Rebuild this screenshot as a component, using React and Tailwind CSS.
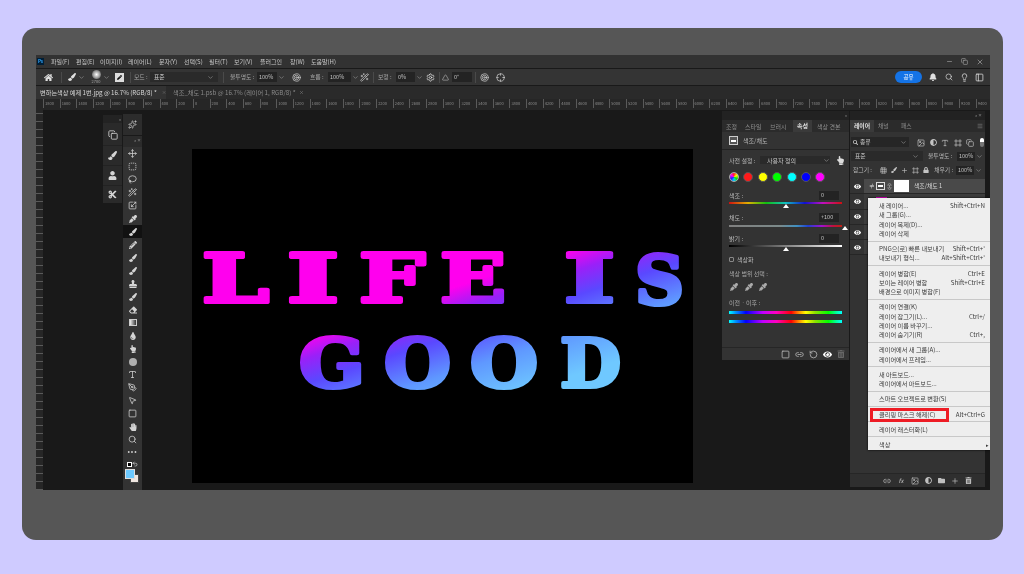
import React from "react";
import { ChevronDown, Lasso, Minus, Move, Search, Square, SquareDashed, X, Copy, PanelLeft, Lightbulb, Undo2, Plus, Link2, Type, Image, Crosshair, Scaling, Grid3x3, Frame, RotateCcw, Settings, Triangle, Sparkles, PenTool, MousePointer2, Target, Wand2, Menu } from "lucide-react";
import { FaHome, FaPaintBrush, FaBell, FaEye, FaHandPaper, FaStamp, FaEraser, FaTint, FaPencilAlt, FaEyeDropper, FaCut, FaTrashAlt, FaFolder, FaLock, FaUser, FaSearch, FaAdjust, FaHandPointUp } from "react-icons/fa";

const menuItems = [
  ["파일(F)", "w-[25px]"], ["편집(E)", "w-[24px]"], ["이미지(I)", "w-[28px]"], ["레이어(L)", "w-[31px]"], ["문자(Y)", "w-[25px]"], ["선택(S)", "w-[25px]"],
  ["필터(T)", "w-[25px]"], ["보기(V)", "w-[26px]"], ["플러그인", "w-[30px]"], ["창(W)", "w-[21px]"], ["도움말(H)", "w-[30px]"],
];

const rulerLabels = [1800, 1600, 1400, 1200, 1000, 800, 600, 400, 200, 0];
for (let v = 200; v <= 9400; v += 200) rulerLabels.push(v);

const contextMenu = [
  [["새 레이어...", "Shift+Ctrl+N"], ["새 그룹(G)..."], ["레이어 복제(D)..."], ["레이어 삭제"]],
  [["PNG으(로) 빠른 내보내기", "Shift+Ctrl+'"], ["내보내기 형식...", "Alt+Shift+Ctrl+'"]],
  [["레이어 병합(E)", "Ctrl+E"], ["보이는 레이어 병합", "Shift+Ctrl+E"], ["배경으로 이미지 병합(F)"]],
  [["레이어 연결(K)"], ["레이어 잠그기(L)...", "Ctrl+/"], ["레이어 이름 바꾸기..."], ["레이어 숨기기(R)", "Ctrl+,"]],
  [["레이어에서 새 그룹(A)..."], ["레이어에서 프레임..."]],
  [["새 아트보드..."], ["레이어에서 아트보드..."]],
  [["스마트 오브젝트로 변환(S)"]],
  [["클리핑 마스크 해제(C)", "Alt+Ctrl+G"]],
  [["레이어 래스터화(L)"]],
  [["색상", "▸"]],
];

const letters = [
  ["L", 202, 302, 67], ["I", 287, 302, 52], ["F", 359, 302, 66], ["E", 440, 302, 66], ["I", 564, 302, 51], ["S", 635, 304, 49],
  ["G", 299, 387, 66], ["O", 384, 387, 67], ["O", 470, 387, 68], ["D", 560, 387, 61],
];

const Tool = ({ icon: Icon, active, size = 9 }) => (
  <div className={`h-[13px] w-full flex items-center justify-center ${active ? "bg-[#111111]" : ""}`}>
    <Icon size={size} className="text-[#d4d4d4]" />
  </div>
);

const Field = ({ children, className }) => (
  <div className={`h-[9px] bg-[#232323] text-[#c4c4c4] text-[5.5px] leading-[9px] px-[2px] ${className}`}>{children}</div>
);

const Chev = ({ className = "" }) => <ChevronDown size={7} className={`text-[#9a9a9a] shrink-0 ${className}`} />;

const Slider = ({ label, value, track, thumb, gap }) => (
  <div className="relative h-[21px] px-[7px] text-[#b8b8b8]">
    <div className="flex h-[10px] items-center justify-between pr-[3px]">
      <span>{label}</span>
      <Field className="w-[20px]">{value}</Field>
    </div>
    <div className={`h-[2px] ${gap} ${track}`} />
    <div className={`absolute top-[14px] w-0 h-0 border-x-[3px] border-x-transparent border-b-[4px] border-b-white ${thumb}`} />
  </div>
);

const Canvas = () => (
  <svg viewBox="192 149 501 334" className="w-[501px] h-[334px] bg-black block shrink-0">
    <defs>
      <linearGradient id="fade" gradientUnits="userSpaceOnUse" x1="124" y1="380" x2="173.6" y2="532">
        <stop offset="0.09" stopColor="#ff00ee" />
        <stop offset="0.225" stopColor="#9a20f8" />
        <stop offset="0.375" stopColor="#5a48ff" />
        <stop offset="0.594" stopColor="#5f98ff" />
        <stop offset="0.844" stopColor="#6fc8ff" />
      </linearGradient>
    </defs>
    {letters.map(([c, x, y, w], i) => (
      <text key={i} x={x} y={y} textLength={w} lengthAdjust="spacingAndGlyphs" fontFamily="'DejaVu Serif', serif" fontWeight="700" fontSize="68" fill="url(#fade)" stroke="url(#fade)" strokeWidth="4" strokeLinejoin="round">{c}</text>
    ))}
  </svg>
);

const ToolColumns = () => (
  <div className="flex items-start ml-[60px] mt-[4px] shrink-0">
    <div className="w-[19px] h-[88px] bg-[#2a2a2a] mt-[1px]">
      <div className="h-[8px] bg-[#232323] text-[#aaa] text-[4px] leading-[8px] text-right pr-[1px]">»</div>
      <div className="h-[20px] flex items-center justify-center mt-[2px]"><Copy size={10} className="text-[#d4d4d4]" /></div>
      <div className="h-[20px] flex items-center justify-center border-t border-[#222]"><FaPaintBrush size={9} className="text-[#d4d4d4]" /></div>
      <div className="h-[20px] flex items-center justify-center border-t border-[#222]"><FaUser size={9} className="text-[#d4d4d4]" /></div>
      <div className="h-[18px] flex items-center justify-center border-t border-[#222]"><FaCut size={9} className="text-[#d4d4d4]" /></div>
    </div>
    <div className="w-[19px] ml-[1px] flex flex-col">
      <div className="h-[21px] bg-[#2c2c2c] flex items-center justify-center"><Sparkles size={9} className="text-[#bcbcbc]" /></div>
      <div className="h-[354px] bg-[#333333] mt-px flex flex-col">
        <div className="h-[11px] bg-[#2b2b2b] text-[#aaa] text-[4px] leading-[9px] text-right pr-[1px]">» ×</div>
        <Tool icon={Move} />
        <Tool icon={SquareDashed} />
        <Tool icon={Lasso} />
        <Tool icon={Wand2} />
        <Tool icon={Scaling} />
        <Tool icon={FaEyeDropper} size={8} />
        <Tool icon={FaPaintBrush} size={8} active />
        <Tool icon={FaPencilAlt} size={8} />
        <Tool icon={FaPaintBrush} size={8} />
        <Tool icon={FaPaintBrush} size={8} />
        <Tool icon={FaStamp} size={8} />
        <Tool icon={FaPaintBrush} size={8} />
        <Tool icon={FaEraser} size={8} />
        <div className="h-[13px] flex items-center justify-center"><div className="w-[8px] h-[7px] border border-[#ccc] bg-[linear-gradient(90deg,#eeeeee,#333333)]" /></div>
        <Tool icon={FaTint} size={8} />
        <Tool icon={FaHandPointUp} size={8} />
        <div className="h-[13px] flex items-center justify-center"><div className="w-[8px] h-[8px] rounded-full bg-[#b0b0b0]" /></div>
        <Tool icon={Type} />
        <Tool icon={PenTool} />
        <Tool icon={MousePointer2} />
        <Tool icon={Square} />
        <Tool icon={FaHandPaper} size={8} />
        <Tool icon={Search} />
        <div className="h-[13px] text-[#ccc] text-[7px] leading-[11px] text-center tracking-[1px]">•••</div>
        <div className="h-[10px] flex items-center justify-between px-[4px]">
          <div className="w-[5px] h-[5px] bg-black border border-white" />
          <Undo2 size={6} className="text-white" />
        </div>
        <div className="relative h-[17px]">
          <div className="absolute left-[7px] top-[5px] w-[9px] h-[9px] bg-[#efe6e0] border border-[#444]" />
          <div className="absolute left-[2px] top-0 w-[10px] h-[10px] bg-[#6cc9ff] border border-[#ddd]" />
        </div>
      </div>
    </div>
  </div>
);

const PropertiesPanel = () => (
  <div className="w-[127px] h-[249px] mt-px ml-[29px] bg-[#333333] flex flex-col text-[6px] text-[#b8b8b8] shrink-0">
    <div className="h-[9px] bg-[#222222] text-[#aaa] text-[4px] leading-[9px] text-right pr-[2px]">»</div>
    <div className="h-[12px] bg-[#2b2b2b] flex items-center text-[#8e8e8e]">
      <span className="pl-[4px] w-[23px]">조정</span>
      <span className="w-[25px]">스타일</span>
      <span className="w-[23px]">브러시</span>
      <span className="w-[19px] h-full bg-[#3a3a3a] text-[#e0e0e0] text-center leading-[12px] font-bold">속성</span>
      <span className="pl-[5px]">색상 견본</span>
    </div>
    <div className="h-[18px] border-b border-[#222] flex items-center pl-[7px]">
      <div className="w-[9px] h-[9px] border border-[#ccc] bg-[#555] flex items-center justify-center"><div className="w-[5px] h-[2px] bg-white" /></div>
      <span className="ml-[5px]">색조/채도</span>
    </div>
    <div className="h-[20px] flex items-center pl-[7px] gap-[4px]">
      <span className="w-[27px] whitespace-nowrap">사전 설정 :</span>
      <div className="w-[70px] h-[8px] bg-[#2a2a2a] flex items-center justify-between pl-[7px] text-[#c8c8c8]">사용자 정의<Chev /></div>
      <FaHandPointUp size={9} className="text-[#ddd] ml-[2px]" />
    </div>
    <div className="h-[14px] flex items-center pl-[7px] gap-[4.4px]">
      <div className="w-[10px] h-[10px] rounded-full border border-[#aaa] bg-[conic-gradient(#ff2020,#ffff00,#00e000,#00d0ff,#2020ff,#ff00ff,#ff2020)]" />
      <div className="w-[10px] h-[10px] rounded-full border border-[#555] bg-[#ff1a1a]" />
      <div className="w-[10px] h-[10px] rounded-full border border-[#555] bg-[#ffff00]" />
      <div className="w-[10px] h-[10px] rounded-full border border-[#555] bg-[#00ff00]" />
      <div className="w-[10px] h-[10px] rounded-full border border-[#555] bg-[#00ffff]" />
      <div className="w-[10px] h-[10px] rounded-full border border-[#555] bg-[#0000ff]" />
      <div className="w-[10px] h-[10px] rounded-full border border-[#555] bg-[#ff00ff]" />
    </div>
    <div className="h-[6px]" />
    <Slider label="색조 :" value="0" gap="mt-[2px]" thumb="left-[61px]" track="bg-[linear-gradient(90deg,#d01010,#e0b000_17%,#10c010_33%,#10c0c0_50%,#1010d0_67%,#c010c0_83%,#d01010)]" />
    <div className="h-px" />
    <Slider label="채도 :" value="+100" gap="mt-[3px]" thumb="left-[120px]" track="bg-[linear-gradient(90deg,#808080,#7c8a8a_45%,#4090c0_60%,#2040d0_70%,#a010d0_82%,#c01040_92%,#c02010)]" />
    <Slider label="밝기 :" value="0" gap="mt-[2px]" thumb="left-[61px]" track="bg-[linear-gradient(90deg,#000000,#808080_50%,#ffffff)]" />
    <div className="h-[10px] flex items-center pl-[7px] gap-[3px]">
      <div className="w-[5px] h-[5px] border border-[#888] rounded-[1px]" />
      <span>색상화</span>
    </div>
    <div className="h-[10px] mt-[5px] pl-[7px] leading-[10px] text-[#a8a8a8]">색상 범위 선택 :</div>
    <div className="h-[12px] mt-[2px] pl-[8px] flex items-center gap-[6.5px]">
      <FaEyeDropper size={8} className="text-[#aaa]" />
      <FaEyeDropper size={8} className="text-[#aaa]" />
      <FaEyeDropper size={8} className="text-[#aaa]" />
    </div>
    <div className="h-[10px] mt-[5px] pl-[7px] leading-[10px] text-[#a8a8a8]">이전 · 이후 :</div>
    <div className="h-[3px] mt-[3px] mx-[7px] bg-[linear-gradient(90deg,#00ffff,#0090ff_6%,#0000ff_15%,#c000ff_30%,#ff00c0_42%,#ff0000_55%,#ff9000_62%,#ffff00_68%,#90e000_76%,#00ff00_88%,#00ffa0_95%,#00ffff)]" />
    <div className="h-[3px] mt-[6px] mx-[7px] bg-[linear-gradient(90deg,#00ffff,#0090ff_6%,#0000ff_15%,#c000ff_30%,#ff00c0_42%,#ff0000_55%,#ff9000_62%,#ffff00_68%,#90e000_76%,#00ff00_88%,#00ffa0_95%,#00ffff)]" />
    <div className="mt-auto h-[13px] border-t border-[#262626] flex items-center justify-end pr-[4px] gap-[5px] text-[#c0c0c0]">
      <Square size={9} />
      <Link2 size={9} />
      <RotateCcw size={9} />
      <FaEye size={9} className="text-white" />
      <FaTrashAlt size={8} className="text-[#666]" />
    </div>
  </div>
);

const LayerRow = ({ children, selected }) => (
  <div className="flex h-[15.3px] border-b border-[#262626]">
    <div className="w-[14px] flex items-center justify-center"><FaEye size={7} className="text-white" /></div>
    <div className={`flex-1 flex items-center ${selected ? "bg-[#494949]" : "bg-[#3c3c3c]"}`}>{children}</div>
  </div>
);

const ContextMenu = () => (
  <div className="absolute left-[18px] top-[87px] w-[122px] h-[252px] bg-[#eeeeee] text-[#3a3a3a] text-[6.2px] z-10 shadow-[0_0_2px_#000]">
    {contextMenu.map((group, i) => (
      <div key={i} className={`pl-[11px] pr-[5px] ${i === 0 ? "pt-[3px]" : "pt-[2.5px] border-t border-[#c8c8c8] mt-[2.4px]"}`}>
        {group.map(([label, keys]) => (
          <div key={label} className="h-[9.3px] flex items-center justify-between whitespace-nowrap">
            <span>{label}</span>
            {keys && <span className={keys === "▸" ? "-mr-[4px] text-[5px]" : ""}>{keys}</span>}
          </div>
        ))}
      </div>
    ))}
    <div className="absolute left-[2px] top-[210px] w-[79px] h-[14px] border-[3px] border-[#ee1c25]" />
  </div>
);

const LayersPanel = () => (
  <div className="relative w-[140px] h-[376px] mt-px ml-px shrink-0 flex flex-col text-[5.8px] text-[#b8b8b8]">
    <div className="w-[135px] h-full bg-[#333333] flex flex-col">
      <div className="h-[9px] bg-[#222222] text-[#aaa] text-[4px] leading-[9px] text-right pr-[3px]">» ×</div>
      <div className="h-[12px] bg-[#2b2b2b] flex items-center text-[#8e8e8e]">
        <span className="w-[24px] h-full bg-[#3a3a3a] text-[#e0e0e0] text-center leading-[12px] font-bold">레이어</span>
        <span className="pl-[4px] w-[22px]">채널</span>
        <span className="pl-[5px]">패스</span>
        <Menu size={6} className="ml-auto mr-[2px]" />
      </div>
      <div className="h-[17px] pt-[5px] flex items-start px-[1px] gap-[5px]">
        <div className="w-[58px] h-[10px] bg-[#262626] flex items-center justify-between px-[2px] text-[#c8c8c8]"><span className="flex items-center gap-[2px]"><FaSearch size={5} />종류</span><Chev /></div>
        <div className="flex items-center gap-[4.5px] pt-[1px] pl-[3px] text-[#c4c4c4]">
          <Image size={8} />
          <FaAdjust size={7} />
          <Type size={8} />
          <Frame size={8} />
          <Copy size={8} />
          <div className="w-[4px] h-[9px] rounded-full bg-[#777] border-t-[4px] border-white ml-[1px]" />
        </div>
      </div>
      <div className="h-[14px] flex items-center px-[1px]">
        <div className="w-[72px] h-[10px] bg-[#2a2a2a] flex items-center justify-between px-[4px] text-[#c8c8c8]">표준<Chev /></div>
        <span className="ml-[5px] w-[29px] whitespace-nowrap">불투명도 :</span>
        <Field className="w-[18px]">100%</Field>
        <Chev className="ml-[1px]" />
      </div>
      <div className="h-[14px] flex items-center px-[3px]">
        <span className="w-[27px] whitespace-nowrap">잠그기 :</span>
        <div className="w-[54px] flex items-center gap-[4px] text-[#c4c4c4]">
          <Grid3x3 size={7} />
          <FaPaintBrush size={6} />
          <Plus size={7} />
          <Frame size={7} />
          <FaLock size={6} />
        </div>
        <span className="ml-[1px] w-[22px] whitespace-nowrap">채우기 :</span>
        <Field className="w-[18px]">100%</Field>
        <Chev className="ml-[1px]" />
      </div>
      <div className="h-[2px]" />
      <LayerRow selected>
        <span className="ml-[5px] w-[5px] text-[#ddd]">≠</span>
        <div className="ml-[2px] w-[9px] h-[8px] border border-[#ddd] flex items-center justify-center"><div className="w-[5px] h-[2px] bg-white" /></div>
        <Link2 size={7} className="ml-[1px] rotate-90" />
        <div className="ml-[1px] w-[15px] h-[12px] bg-white" />
        <span className="ml-[5px] text-[#d8d8d8]">색조/채도 1</span>
      </LayerRow>
      <LayerRow><div className="ml-[12px] w-[11px] h-[9px] bg-[#ff00e0]" /></LayerRow>
      <LayerRow />
      <LayerRow />
      <LayerRow />
      <div className="mt-auto h-[14px] bg-[#2f2f2f] border-t border-[#262626] flex items-center justify-end pr-[13px] gap-[6px] text-[#c0c0c0]">
        <Link2 size={8} />
        <span className="w-[8px] text-center italic text-[6px]">fx</span>
        <Image size={8} />
        <FaAdjust size={7} />
        <FaFolder size={7} />
        <Plus size={8} />
        <FaTrashAlt size={7} />
      </div>
    </div>
    <ContextMenu />
  </div>
);

export default function App() {
  return (
    <div className="w-full h-[574px] bg-[#cfcbff] flex items-start pl-[22px] pt-[28px] [font-family:'Noto_Sans_CJK_KR','Noto_Sans',sans-serif]">
      <div className="w-[981px] h-[512px] rounded-[14px] bg-[#565656] pl-[14px] pt-[27px]">
        <div className="w-[954px] h-[435px] flex flex-col overflow-hidden bg-[#191919] blur-[0.4px]">
          {/* menu bar */}
          <div className="h-[13px] bg-[#323232] flex items-center text-[6px] text-[#c8c8c8] shrink-0">
            <div className="ml-[1px] w-[7px] h-[7px] bg-[#001e36] text-[#31a8ff] text-[4.5px] leading-[7px] text-center font-bold">Ps</div>
            <div className="ml-[7px] flex">
              {menuItems.map(([m, w]) => <span key={m} className={`${w} whitespace-nowrap`}>{m}</span>)}
            </div>
            <div className="ml-auto flex items-center gap-[8px] pr-[6px] text-[#aaa]">
              <Minus size={7} />
              <Copy size={7} />
              <X size={8} />
            </div>
          </div>
          {/* options bar */}
          <div className="h-[16px] mt-px bg-[#343434] flex items-center text-[5.8px] text-[#a8a8a8] shrink-0">
            <FaHome size={9} className="ml-[8px] text-[#e0e0e0]" />
            <div className="ml-[8px] w-px h-[11px] bg-[#4a4a4a]" />
            <FaPaintBrush size={8} className="ml-[6px] text-[#e0e0e0]" />
            <Chev className="ml-[2px]" />
            <div className="ml-[4px] w-[14px] flex flex-col items-center">
              <div className="w-[9px] h-[9px] rounded-full bg-[radial-gradient(#ffffff,#666666_80%)]" />
              <span className="text-[4px] leading-[5px]">2700</span>
            </div>
            <Chev />
            <div className="ml-[5px] w-[9px] h-[9px] bg-[#ddd] flex items-center justify-center"><FaPencilAlt size={5} className="text-black" /></div>
            <div className="ml-[6px] w-px h-[11px] bg-[#4a4a4a]" />
            <span className="ml-[3px] w-[16px]">모드 :</span>
            <div className="w-[68px] h-[10px] bg-[#2a2a2a] flex items-center justify-between px-[4px] text-[#d0d0d0]">표준<Chev /></div>
            <div className="ml-[5px] w-px h-[11px] bg-[#4a4a4a]" />
            <span className="ml-[6px] w-[27px] whitespace-nowrap">불투명도 :</span>
            <Field className="w-[20px] !h-[10px] !leading-[10px]">100%</Field>
            <Chev className="ml-[1px]" />
            <Target size={9} className="ml-[7px] text-[#c8c8c8]" />
            <span className="ml-[9px] w-[16px] whitespace-nowrap">흐름 :</span>
            <Field className="ml-[2px] w-[23px] !h-[10px] !leading-[10px]">100%</Field>
            <Chev className="ml-[1px]" />
            <Wand2 size={9} className="ml-[1px] text-[#c8c8c8]" />
            <div className="ml-[4px] w-px h-[11px] bg-[#4a4a4a]" />
            <span className="ml-[4px] w-[17px] whitespace-nowrap">보정 :</span>
            <Field className="ml-[1px] w-[19px] !h-[10px] !leading-[10px]">0%</Field>
            <Chev className="ml-[1px]" />
            <Settings size={9} className="ml-[3px] text-[#e0e0e0]" />
            <div className="ml-[4px] w-px h-[11px] bg-[#4a4a4a]" />
            <Triangle size={7} className="ml-[2px] text-[#c0c0c0]" />
            <Field className="ml-[3px] w-[20px] !h-[10px] !leading-[10px]">0°</Field>
            <div className="ml-[3px] w-px h-[11px] bg-[#4a4a4a]" />
            <Target size={9} className="ml-[4px] text-[#c8c8c8]" />
            <Crosshair size={9} className="ml-[7px] text-[#c8c8c8]" />
            <div className="ml-auto w-[27px] h-[12px] rounded-full bg-[#1473e6] text-white text-[5.5px] leading-[12px] text-center">공유</div>
            <FaBell size={8} className="ml-[7px] text-[#e0e0e0]" />
            <Search size={8} className="ml-[8px] text-[#e0e0e0]" />
            <Lightbulb size={9} className="ml-[7px] text-[#e0e0e0]" />
            <PanelLeft size={9} className="ml-[6px] mr-[6px] text-[#e0e0e0]" />
          </div>
          {/* document tabs */}
          <div className="h-[13px] mt-px bg-[#2a2a2a] flex items-center text-[6.2px] shrink-0">
            <div className="w-[130px] h-full bg-[#333333] text-[#d8d8d8] flex items-center whitespace-nowrap pl-[4px] gap-[3px]">변하는색상 예제 1번.jpg @ 16.7% (RGB/8) * <X size={5} className="ml-[2px] text-[#888]" /></div>
            <div className="ml-[7px] text-[#8a8a8a] flex items-center whitespace-nowrap gap-[3px]">색조_채도 1.psb @ 16.7% (레이어 1, RGB/8) * <X size={5} /></div>
          </div>
          {/* top ruler */}
          <div className="h-[11px] bg-[#262626] flex items-start pl-[7px] shrink-0 overflow-hidden">
            {rulerLabels.map((v, i) => (
              <div key={i} className="w-[16.67px] h-[9px] shrink-0 border-l border-[#5a5a5a] pl-px text-[4px] leading-[9px] text-[#8c8c8c]">{v}</div>
            ))}
          </div>
          {/* workspace */}
          <div className="flex-1 flex items-start min-h-0">
            <div className="w-[7px] h-full shrink-0 bg-[#262626] bg-[repeating-linear-gradient(0deg,#5a5a5a_0,#5a5a5a_1px,transparent_1px,transparent_8px)]" />
            <ToolColumns />
            <div className="ml-[50px] mt-[39px] shrink-0"><Canvas /></div>
            <PropertiesPanel />
            <LayersPanel />
          </div>
        </div>
      </div>
    </div>
  );
}
